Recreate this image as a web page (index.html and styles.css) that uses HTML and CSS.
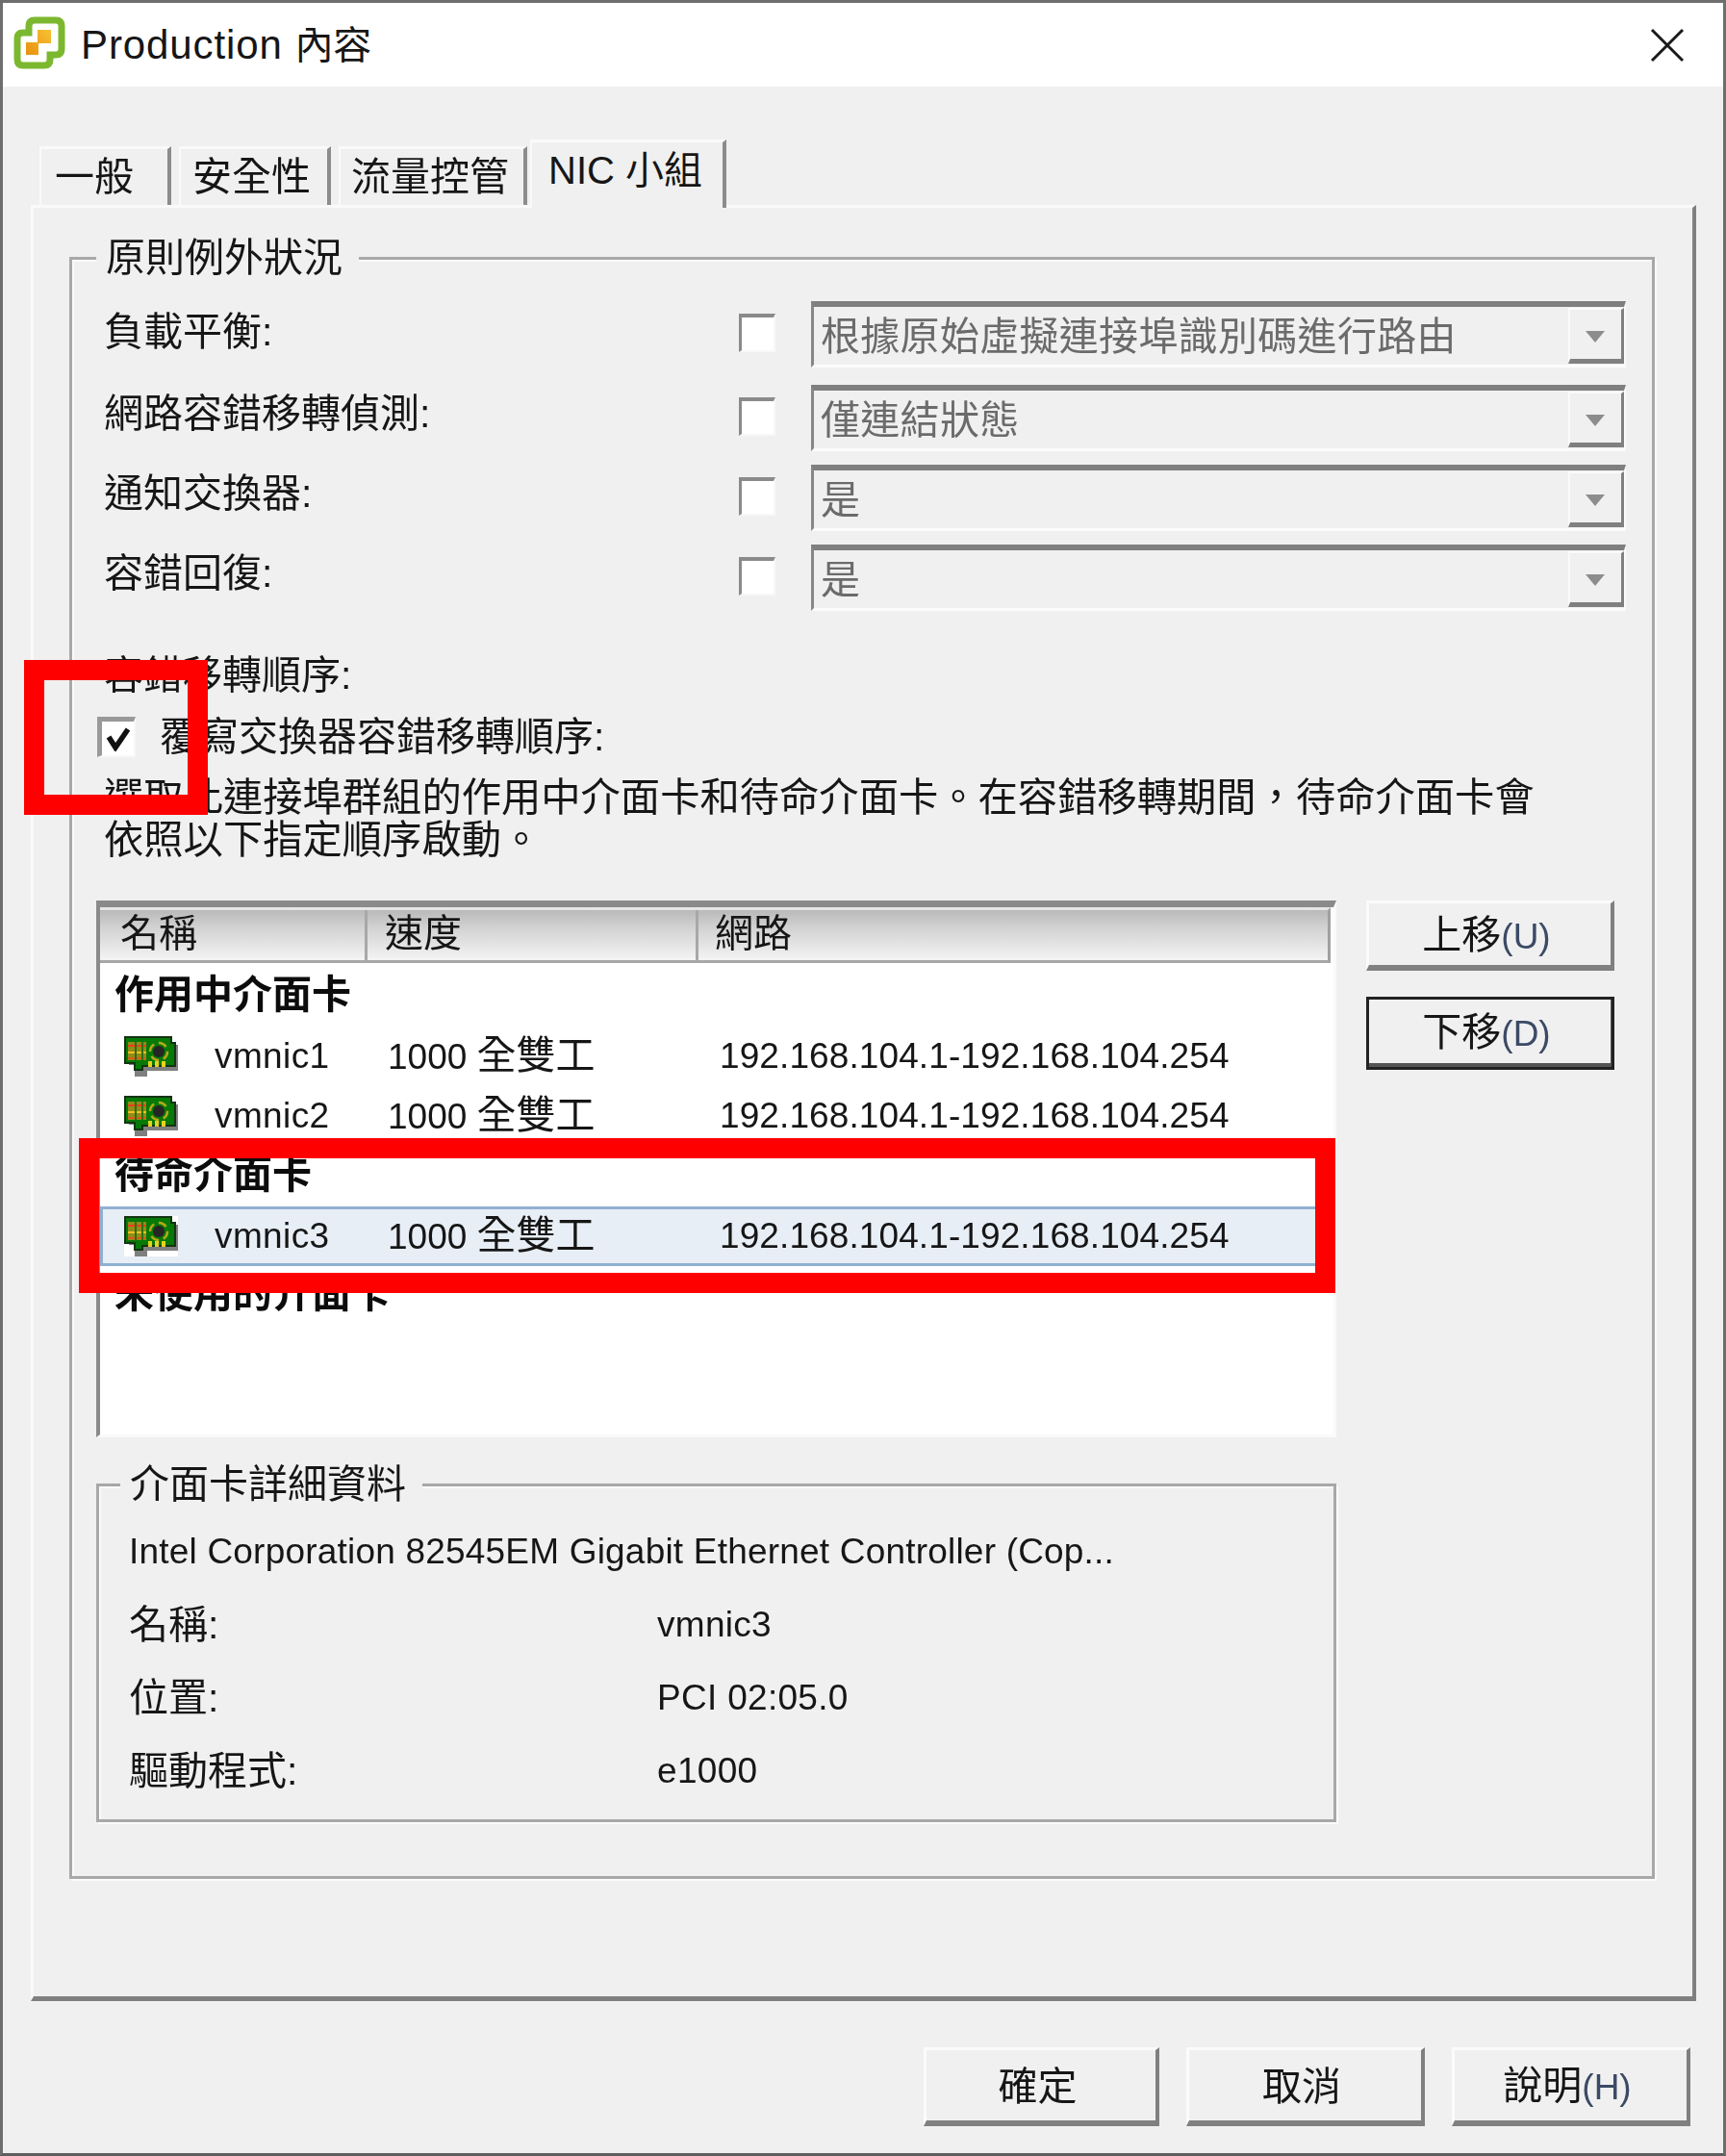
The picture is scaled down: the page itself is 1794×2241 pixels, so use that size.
FILE: index.html
```html
<!DOCTYPE html>
<html lang="zh-Hant">
<head>
    <meta charset="UTF-8">
    <title>Production 內容</title>
    <link rel="stylesheet" href="styles.css">
</head>
<body>
<svg class="sprite" width="0" height="0">
    <defs>
        <linearGradient id="orange" x1="1" y1="0" x2="0" y2="1">
            <stop offset="0" stop-color="#f7c233"/>
            <stop offset="1" stop-color="#e8900e"/>
        </linearGradient>
        <symbol id="nic" viewBox="0 0 56 42">
            <path d="M5 9 H56 V36 H24 V42 H11 V30 H5 Z" fill="#3a3a3a" opacity=".65"/>
            <path d="M1 1 H49 V7 H53 V31 H19 V35 H11 V28 H1 Z" fill="#067a06" stroke="#143314" stroke-width="2"/>
            <rect x="4" y="6" width="19" height="19" fill="#8f8d18"/>
            <rect x="4" y="9" width="19" height="2" fill="#e8421a"/>
            <rect x="4" y="16" width="19" height="2" fill="#f2c01e"/>
            <rect x="4" y="22" width="19" height="2" fill="#d85a16"/>
            <rect x="11" y="6" width="2" height="19" fill="#2e6e12"/>
            <rect x="18" y="6" width="2" height="19" fill="#2e6e12"/>
            <circle cx="36" cy="16" r="9" fill="none" stroke="#b8a818" stroke-width="2.5" stroke-dasharray="9 5"/>
            <circle cx="36" cy="16" r="6" fill="#262626"/>
            <rect x="25" y="26" width="4" height="6" fill="#e6d21e"/>
            <rect x="32" y="26" width="4" height="6" fill="#e6d21e"/>
            <rect x="39" y="26" width="4" height="6" fill="#e6d21e"/>
        </symbol>
    </defs>
</svg>

<div class="dialog">
    <div class="dialog-inner">
        <header class="titlebar">
            <svg class="logo" viewBox="0 0 56 56" width="56" height="56">
                <path d="M23 5 H45 Q51 5 51 11 V35 Q51 41 45 41 H39 V46 Q39 52 33 52 H11 Q5 52 5 46 V24 Q5 18 11 18 H17 V11 Q17 5 23 5 Z" fill="none" stroke="#7cb82f" stroke-width="7"/>
                <path d="M26 15 H40 V29 H27 V41 H14 V28 H26 Z" fill="url(#orange)"/>
            </svg>
            <span class="title">Production <span class="title-cjk">內容</span></span>
            <svg class="close" viewBox="0 0 36 36" width="36" height="36">
                <path d="M2 2 L34 34 M34 2 L2 34" stroke="#1a1a1a" stroke-width="3"/>
            </svg>
        </header>

        <nav class="tabs">
            <div class="tab tab-general">一般</div>
            <div class="tab tab-security">安全性</div>
            <div class="tab tab-traffic">流量控管</div>
            <div class="tab tab-active">NIC 小組</div>
        </nav>

        <section class="panel">
            <fieldset class="group group-main">
                <legend>原則例外狀況</legend>

                <div class="policy-row">
                    <span class="policy-label">負載平衡:</span>
                    <span class="check"></span>
                    <div class="combo"><span>根據原始虛擬連接埠識別碼進行路由</span><i class="combo-btn"></i></div>
                </div>
                <div class="policy-row">
                    <span class="policy-label">網路容錯移轉偵測:</span>
                    <span class="check"></span>
                    <div class="combo"><span>僅連結狀態</span><i class="combo-btn"></i></div>
                </div>
                <div class="policy-row">
                    <span class="policy-label">通知交換器:</span>
                    <span class="check"></span>
                    <div class="combo"><span>是</span><i class="combo-btn"></i></div>
                </div>
                <div class="policy-row">
                    <span class="policy-label">容錯回復:</span>
                    <span class="check"></span>
                    <div class="combo"><span>是</span><i class="combo-btn"></i></div>
                </div>

                <div class="failover-title">容錯移轉順序:</div>
                <div class="override">
                    <span class="check check-on">
                        <svg viewBox="0 0 26 26" width="26" height="26"><path d="M3 11 L10 22 L23 3" fill="none" stroke="#111" stroke-width="5.5"/></svg>
                    </span>
                    <span>覆寫交換器容錯移轉順序:</span>
                </div>
                <p class="desc">選取此連接埠群組的作用中介面卡和待命介面卡。在容錯移轉期間，待命介面卡會<br>依照以下指定順序啟動。</p>

                <div class="list-area">
                    <div class="nic-list">
                        <div class="list-head">
                            <div class="col-name">名稱</div>
                            <div class="col-speed">速度</div>
                            <div class="col-net">網路</div>
                        </div>
                        <div class="list-group list-group-first">作用中介面卡</div>
                        <div class="nic-row">
                            <svg class="nic-icon"><use href="#nic"/></svg>
                            <span class="nic-name">vmnic1</span>
                            <span class="nic-speed">1000 <span class="duplex">全雙工</span></span>
                            <span class="nic-ip">192.168.104.1-192.168.104.254</span>
                        </div>
                        <div class="nic-row">
                            <svg class="nic-icon"><use href="#nic"/></svg>
                            <span class="nic-name">vmnic2</span>
                            <span class="nic-speed">1000 <span class="duplex">全雙工</span></span>
                            <span class="nic-ip">192.168.104.1-192.168.104.254</span>
                        </div>
                        <div class="list-group list-group-standby">待命介面卡</div>
                        <div class="nic-row nic-row-selected">
                            <svg class="nic-icon"><use href="#nic"/></svg>
                            <span class="nic-name">vmnic3</span>
                            <span class="nic-speed">1000 <span class="duplex">全雙工</span></span>
                            <span class="nic-ip">192.168.104.1-192.168.104.254</span>
                        </div>
                        <div class="list-group list-group-unused">未使用的介面卡</div>
                    </div>
                    <div class="move-btns">
                        <div class="btn btn-move"><span>上移<em>(U)</em></span></div>
                        <div class="btn btn-move btn-focus"><span>下移<em>(D)</em></span></div>
                    </div>
                </div>

                <fieldset class="group group-details">
                    <legend>介面卡詳細資料</legend>
                    <div class="card-title">Intel Corporation 82545EM Gigabit Ethernet Controller (Cop...</div>
                    <div class="detail-row"><span>名稱:</span><span class="detail-val">vmnic3</span></div>
                    <div class="detail-row"><span>位置:</span><span class="detail-val">PCI 02:05.0</span></div>
                    <div class="detail-row"><span>驅動程式:</span><span class="detail-val">e1000</span></div>
                </fieldset>
            </fieldset>
        </section>

        <footer class="actions">
            <div class="btn btn-ok">確定</div>
            <div class="btn btn-wide">取消</div>
            <div class="btn btn-wide"><span>說明<em>(H)</em></span></div>
        </footer>
    </div>

    <div class="mark mark-check"></div>
    <div class="mark mark-row"></div>
</div>
</body>
</html>
```

FILE: styles.css
```css
* {
    box-sizing: border-box;
}

html, body {
    margin: 0;
    padding: 0;
}

body {
    font-family: "Liberation Sans", "Noto Sans CJK TC", sans-serif;
    font-size: 41px;
    line-height: 44px;
    color: #161616;
    background: #f0f0f0;
}

.sprite {
    position: absolute;
}

.dialog {
    position: relative;
    width: 1794px;
    height: 2241px;
    background: #f0f0f0;
    border-top: 3px solid #6e6e6e;
    border-left: 3px solid #6e6e6e;
    border-right: 3px solid #6e6e6e;
    border-bottom: 3px solid #5f5f5f;
    overflow: hidden;
}

.dialog-inner {
    height: 100%;
    filter: blur(0.6px);
}

/* title bar */
.titlebar {
    display: flex;
    align-items: center;
    height: 87px;
    background: #fff;
    padding-left: 10px;
}

.logo {
    flex: none;
    margin-top: -5px;
}

.title {
    margin-left: 15px;
    font-size: 42px;
    letter-spacing: 0.9px;
}

.title-cjk {
    font-size: 40px;
    letter-spacing: 0;
}

.close {
    margin-left: auto;
    margin-right: 40px;
}

/* tabs */
.tabs {
    display: flex;
    align-items: flex-end;
    margin: 55px 0 0 38px;
    height: 68px;
}

.tab {
    height: 61px;
    padding: 7px 0 0 14px;
    margin-right: 8px;
    border-top: 3px solid #fafafa;
    border-left: 2px solid #fafafa;
    border-right: 4px solid #8c8c8c;
    white-space: nowrap;
}

.tab-general {
    width: 137px;
}

.tab-security {
    width: 158px;
    padding-left: 12px;
}

.tab-traffic {
    width: 196px;
    margin-right: 3px;
    padding-left: 11px;
}

.tab-active {
    position: relative;
    z-index: 1;
    width: 204px;
    height: 71px;
    margin-bottom: -3px;
    margin-right: 0;
    padding: 7px 0 0 17px;
    background: #f0f0f0;
    font-size: 40px;
}

/* main panel */
.panel {
    width: 1731px;
    height: 1867px;
    margin-left: 29px;
    padding: 30px 39px 0 37px;
    border-top: 3px solid #fafafa;
    border-left: 3px solid #fafafa;
    border-right: 4px solid #808080;
    border-bottom: 5px solid #808080;
}

.group {
    margin: 0;
    min-width: 0;
    border: 3px solid #a8a8a8;
    box-shadow: 2px 2px 0 #fbfbfb, inset 2px 2px 0 #fbfbfb;
}

.group legend {
    padding: 0 17px 0 10px;
    background: #f0f0f0;
    line-height: 44px;
    white-space: nowrap;
}

.group-main {
    height: 1707px;
    padding: 0 0 0 33px;
}

.group-main > legend {
    margin-left: -8px;
}

/* policy rows */
.policy-row {
    display: grid;
    grid-template-columns: 660px 38px 847px;
    column-gap: 0;
    align-items: center;
    height: 69px;
    margin-bottom: 14px;
}

.policy-row:first-of-type {
    margin-top: 23px;
    margin-bottom: 18px;
}

.policy-row:first-of-type .policy-label {
    padding-bottom: 6px;
}

.policy-label {
    padding-bottom: 9px;
    white-space: nowrap;
}

.check {
    display: flex;
    align-items: center;
    justify-content: center;
    width: 38px;
    height: 40px;
    margin-bottom: 3px;
    background: #fff;
    border-top: 4px solid #8a8a8a;
    border-left: 3px solid #8a8a8a;
    border-right: 2px solid #f8f8f8;
    border-bottom: 2px solid #f8f8f8;
}

.combo {
    display: flex;
    align-items: center;
    justify-content: space-between;
    grid-column: 3;
    margin-left: 37px;
    width: 847px;
    height: 69px;
    padding-left: 7px;
    color: #6b6b6b;
    border-top: 6px solid #7f7f7f;
    border-left: 3px solid #878787;
    border-right: 2px solid #fbfbfb;
    border-bottom: 3px solid #fbfbfb;
}

.combo span {
    padding-top: 2px;
    letter-spacing: 0.3px;
    white-space: nowrap;
}

.combo-btn {
    position: relative;
    flex: none;
    width: 58px;
    height: 58px;
    border-top: 2px solid #fafafa;
    border-left: 2px solid #fafafa;
    border-right: 3px solid #808080;
    border-bottom: 5px solid #808080;
}

.combo-btn::after {
    content: "";
    position: absolute;
    left: 16px;
    top: 22px;
    border-top: 12px solid #8c8c8c;
    border-left: 10px solid transparent;
    border-right: 10px solid transparent;
}

/* failover order */
.failover-title {
    margin-top: 45px;
    white-space: nowrap;
}

.override {
    display: flex;
    align-items: center;
    height: 44px;
    margin: 20px 0 0 -7px;
    white-space: nowrap;
}

.check-on {
    flex: none;
    width: 40px;
    height: 42px;
    margin: 0 25px 0 0;
    border-top-color: #999;
    border-left-color: #999;
    border-left-width: 5px;
    border-top-width: 5px;
}

.desc {
    margin: 19px 0 0;
    font-size: 41.3px;
    white-space: nowrap;
}

/* adapter list */
.list-area {
    display: flex;
    margin: 41px 0 0 -8px;
}

.nic-list {
    width: 1289px;
    height: 558px;
    background: #fff;
    border-top: 7px solid #8a8a8a;
    border-left: 4px solid #8a8a8a;
    border-right: 3px solid #fafafa;
    border-bottom: 3px solid #fafafa;
    overflow: hidden;
}

.list-head {
    display: flex;
    height: 58px;
    margin-right: 3px;
    background: linear-gradient(#b9b9b9, #d2d2d2 35%, #f4f4f4);
    border-top: 3px solid #e6e6e6;
    border-bottom: 3px solid #a8a8a8;
    border-right: 3px solid #a0a0a0;
    line-height: 48px;
    font-size: 40px;
}

.col-name {
    width: 278px;
    padding-left: 21px;
    border-right: 3px solid #a8a8a8;
}

.col-speed {
    width: 344px;
    padding-left: 18px;
    border-right: 3px solid #a8a8a8;
}

.col-net {
    padding-left: 17px;
}

.list-group {
    height: 62px;
    padding-left: 15px;
    line-height: 62px;
    font-weight: 700;
    color: #0c0c0c;
}

.list-group-first {
    height: 65px;
    line-height: 66px;
}

.list-group-standby {
    height: 64px;
}

.list-group-unused {
    line-height: 58px;
}

.nic-row {
    display: flex;
    align-items: center;
    height: 62px;
    padding-left: 25px;
    padding-top: 2px;
    font-size: 37px;
    white-space: nowrap;
}

.nic-icon {
    flex: none;
    width: 56px;
    height: 42px;
}

.nic-name {
    width: 179px;
    margin-left: 38px;
    letter-spacing: 0.4px;
}

.nic-speed {
    width: 345px;
    margin-left: 1px;
}

.duplex {
    font-size: 41px;
}

.nic-ip {
    letter-spacing: 0.1px;
}

.nic-row-selected {
    padding-top: 0;
    background: #e8eef6;
    border-top: 3px solid #8fb0d2;
    border-bottom: 3px solid #8fb0d2;
    border-left: 3px solid #8fb0d2;
    padding-left: 22px;
}

.nic-row-selected .nic-icon {
    background: #fff;
}

/* buttons */
.move-btns {
    display: flex;
    flex-direction: column;
    gap: 27px;
    margin-left: 31px;
}

.btn {
    display: flex;
    align-items: center;
    justify-content: center;
    border-top: 3px solid #fbfbfb;
    border-left: 3px solid #fbfbfb;
    border-right: 4px solid #808080;
    border-bottom: 6px solid #808080;
    padding-right: 7px;
    white-space: nowrap;
}

.btn em {
    font-style: normal;
    font-size: 37px;
    color: #3c4a66;
}

.btn-move {
    width: 258px;
    height: 73px;
    padding-top: 4px;
}

.btn-focus {
    height: 76px;
    outline: 3px solid #222;
    outline-offset: -3px;
    border-bottom-width: 7px;
    border-right-color: #555;
    border-bottom-color: #555;
}

/* details */
.group-details {
    width: 1289px;
    height: 373px;
    margin: 27px 0 0 -8px;
    padding: 0 0 0 31px;
}

.group-details > legend {
    margin-left: -9px;
}

.card-title {
    margin-top: 26px;
    font-size: 37px;
    letter-spacing: 0.2px;
    white-space: nowrap;
}

.detail-row {
    display: flex;
    margin-top: 32px;
}

.detail-row:first-of-type {
    margin-top: 29px;
}

.detail-row span:first-child {
    width: 549px;
}

.detail-val {
    font-size: 37px;
    letter-spacing: 0.3px;
}

/* bottom buttons */
.actions {
    display: flex;
    justify-content: flex-end;
    gap: 28px;
    margin-top: 48px;
    padding-right: 34px;
}

.actions .btn {
    height: 82px;
    padding-top: 2px;
}

.btn-ok {
    width: 245px;
}

.btn-wide {
    width: 248px;
}

/* red annotation boxes */
.mark {
    position: absolute;
    border: 21px solid #ff0000;
}

.mark-check {
    left: 22px;
    top: 683px;
    width: 191px;
    height: 161px;
}

.mark-row {
    left: 79px;
    top: 1180px;
    width: 1306px;
    height: 161px;
}
```
